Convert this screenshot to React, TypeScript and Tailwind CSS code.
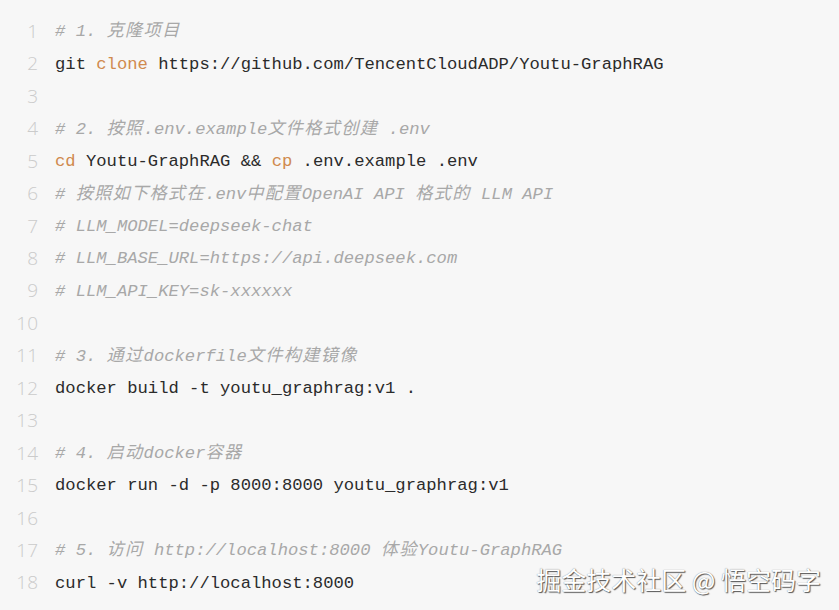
import React from 'react';

type Tok = { t: string; k?: 'kw' | 'cm' };

const lines: Tok[][] = [
  [{ t: '# 1. 克隆项目', k: 'cm' }],
  [{ t: 'git ' }, { t: 'clone', k: 'kw' }, { t: ' https://github.com/TencentCloudADP/Youtu-GraphRAG' }],
  [],
  [{ t: '# 2. 按照.env.example文件格式创建 .env', k: 'cm' }],
  [{ t: 'cd', k: 'kw' }, { t: ' Youtu-GraphRAG && ' }, { t: 'cp', k: 'kw' }, { t: ' .env.example .env' }],
  [{ t: '# 按照如下格式在.env中配置OpenAI API 格式的 LLM API', k: 'cm' }],
  [{ t: '# LLM_MODEL=deepseek-chat', k: 'cm' }],
  [{ t: '# LLM_BASE_URL=https://api.deepseek.com', k: 'cm' }],
  [{ t: '# LLM_API_KEY=sk-xxxxxx', k: 'cm' }],
  [],
  [{ t: '# 3. 通过dockerfile文件构建镜像', k: 'cm' }],
  [{ t: 'docker build -t youtu_graphrag:v1 .' }],
  [],
  [{ t: '# 4. 启动docker容器', k: 'cm' }],
  [{ t: 'docker run -d -p 8000:8000 youtu_graphrag:v1' }],
  [],
  [{ t: '# 5. 访问 http://localhost:8000 体验Youtu-GraphRAG', k: 'cm' }],
  [{ t: 'curl -v http://localhost:8000' }],
];

// CJK glyphs sit on a double-width cell in the original editor
const splitCjk = (s: string) => s.split(/([\u4e00-\u9fff]+)/).filter(Boolean);

const Text: React.FC<{ s: string }> = ({ s }) => (
  <>
    {splitCjk(s).map((p, i) =>
      /[\u4e00-\u9fff]/.test(p) ? (
        <span key={i} className="tracking-[1.3px]">{p}</span>
      ) : (
        <span key={i}>{p}</span>
      )
    )}
  </>
);

const App: React.FC = () => {
  return (
    <div className="relative w-[839px] h-[610px] overflow-hidden bg-[#f7f7f7]">
      <div className="flex flex-col pt-[16px]">
        {lines.map((toks, i) => (
          <div key={i} className="flex h-[32.45px] items-center">
            <div className="w-[38px] -mt-[2px] text-right text-[19px] text-[#cbcbcb] font-['Open_Sans',sans-serif] font-light">
              {i + 1}
            </div>
            <div className="pl-[17px] whitespace-pre text-[17.2px] text-[#2b2b2b] font-['Liberation_Mono','Noto_Sans_CJK_SC',monospace]">
              {toks.map((tk, j) => (
                <span
                  key={j}
                  className={
                    tk.k === 'kw'
                      ? 'text-[#d08a4e]'
                      : tk.k === 'cm'
                      ? 'text-[#a8a8a8] italic'
                      : ''
                  }
                >
                  <Text s={tk.t} />
                </span>
              ))}
            </div>
          </div>
        ))}
      </div>

      {/* watermark */}
      <div className="absolute right-[18px] bottom-[12px] text-[25px] text-white font-['Noto_Sans_CJK_SC',sans-serif] [text-shadow:1px_1px_1px_#555,0_0_1px_#777]">
        掘金技术社区 @ 悟空码字
      </div>
    </div>
  );
};

export default App;
